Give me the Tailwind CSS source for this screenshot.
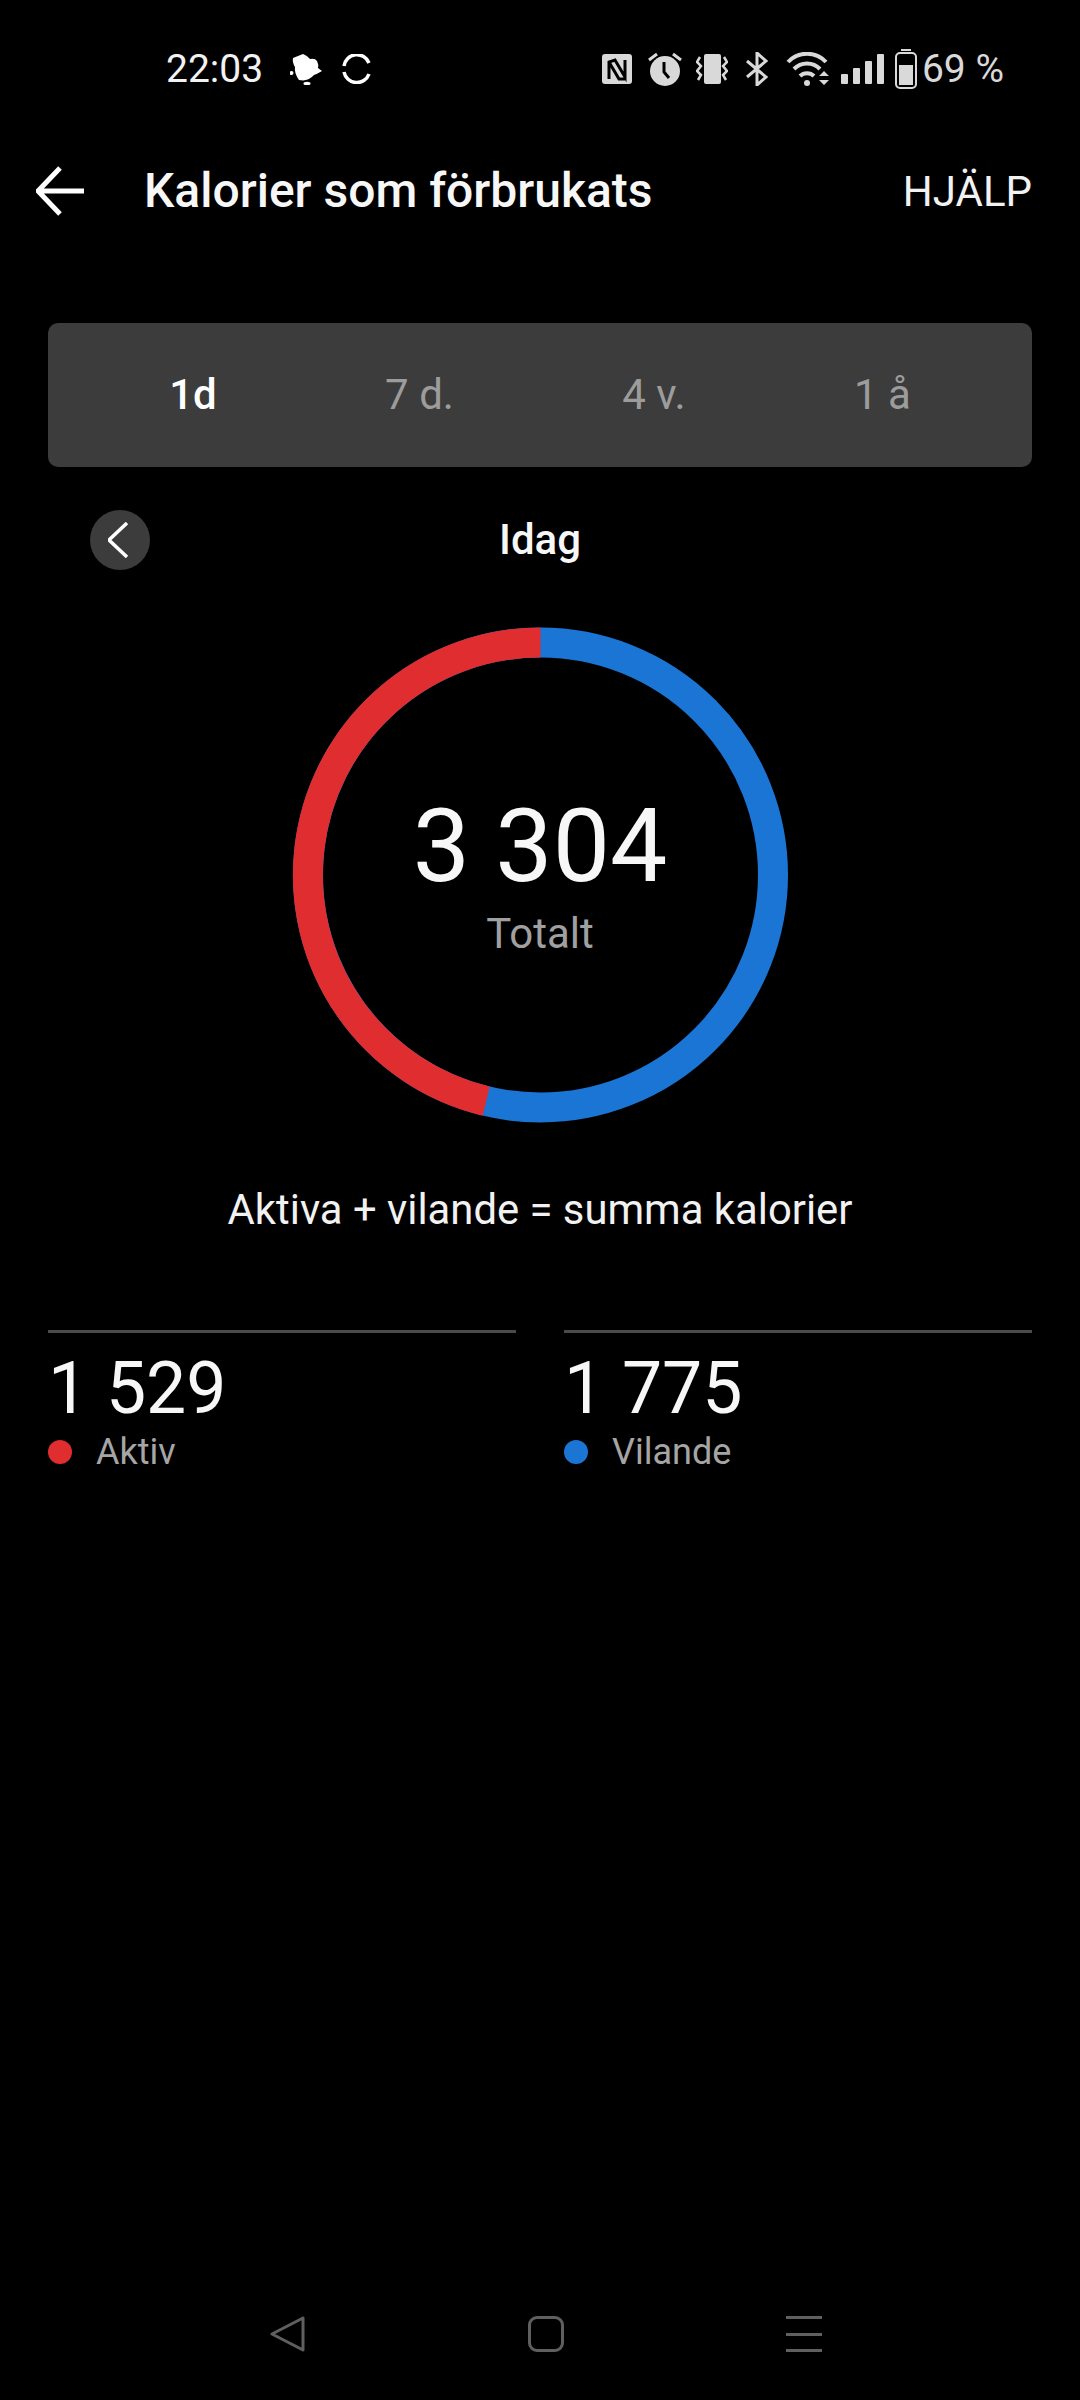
<!DOCTYPE html>
<html lang="sv">
<head>
    <meta charset="UTF-8">
    <meta name="viewport" content="width=device-width, initial-scale=1.0">
    <title>Kalorier som förbrukats</title>
    <script src="https://cdn.jsdelivr.net/npm/@tailwindcss/browser@4"></script>
</head>
<body class="bg-black">
    <div class="w-[1080px] h-[2400px] flex flex-col bg-black text-white font-['Roboto',sans-serif]">
        <!-- Status bar -->
        <div class="h-[138px] pl-[166px] pr-[76px] flex items-center text-[39px]">
            <span class="text-[#f2f2f2]">22:03</span>
            <svg class="w-[32px] h-[32px] ml-[27px]" viewBox="0 0 32 32" fill="#fff">
                <path d="M3 5Q8 3 13 1Q18 3 20 6Q25 5 27 8Q29 12 28 15L32 18Q27 21 24 22Q18 29 9 27Q4 20 5 14Q2 9 3 5z"/>
                <circle cx="1.5" cy="20" r="2"/><ellipse cx="17" cy="30.5" rx="3.5" ry="1.8"/>
            </svg>
            <svg class="w-[30px] h-[30px] ml-[20px]" viewBox="0 0 30 30" fill="none" stroke="#fff" stroke-width="3.5">
                <path d="M2 12A13 13 0 0 1 27 9"/>
                <path d="M27 20A13 13 0 0 1 2 18"/>
            </svg>
            <div class="ml-auto flex items-center text-[#d9d9d9]">
                <svg class="w-[30px] h-[30px]" viewBox="0 0 30 30">
                    <rect width="30" height="30" rx="3" fill="#d9d9d9"/>
                    <path d="M7 25V8l6-2 10 17V6M7 8l10 17h6" fill="none" stroke="#000" stroke-width="3"/>
                </svg>
                <svg class="w-[34px] h-[36px] ml-[16px]" viewBox="0 0 34 36">
                    <circle cx="17" cy="20" r="15" fill="#d9d9d9"/>
                    <path d="M16 11v10l5 6" fill="none" stroke="#000" stroke-width="3"/>
                    <path d="M1 9l8-6M33 9l-8-6" stroke="#d9d9d9" stroke-width="3"/>
                </svg>
                <svg class="w-[32px] h-[30px] ml-[14px]" viewBox="0 0 32 30">
                    <rect x="8" y="0" width="17" height="30" rx="2" fill="#d9d9d9"/>
                    <path d="M4 3L1 8l4 4-4 5 4 4-3 5M28 3l3 5-4 4 4 5-4 4 3 5" fill="none" stroke="#d9d9d9" stroke-width="2.5"/>
                </svg>
                <svg class="w-[22px] h-[34px] ml-[18px]" viewBox="0 0 22 34" fill="none" stroke="#d9d9d9" stroke-width="3">
                    <path d="M1 9l19 16-9 8V1l9 8L1 25"/>
                </svg>
                <svg class="w-[46px] h-[34px] ml-[18px]" viewBox="0 0 46 34">
                    <path d="M2 10a26 26 0 0 1 38 0M8 17a18 18 0 0 1 26 0M14 24a10 10 0 0 1 14 0" fill="none" stroke="#d9d9d9" stroke-width="4"/>
                    <circle cx="21" cy="31" r="3" fill="#d9d9d9"/>
                    <path d="M33 24l5-5 5 5zM33 28l5 5 5-5z" fill="#d9d9d9"/>
                </svg>
                <div class="flex items-end gap-[5px] h-[30px] ml-[9px]">
                    <div class="w-[7px] h-[10px] rounded-[1px] bg-[#d9d9d9]"></div>
                    <div class="w-[7px] h-[16px] rounded-[1px] bg-[#d9d9d9]"></div>
                    <div class="w-[7px] h-[23px] rounded-[1px] bg-[#d9d9d9]"></div>
                    <div class="w-[7px] h-[30px] rounded-[1px] bg-[#d9d9d9]"></div>
                </div>
                <svg class="w-[22px] h-[40px] ml-[11px]" viewBox="0 0 22 40">
                    <rect x="6" y="0" width="10" height="2" fill="#d9d9d9"/>
                    <rect x="1" y="4" width="20" height="35" rx="4" fill="none" stroke="#d9d9d9" stroke-width="2"/>
                    <rect x="4" y="16" width="14" height="20" fill="#d9d9d9"/>
                </svg>
                <span class="ml-[5px]">69 %</span>
            </div>
        </div>

        <!-- Header -->
        <div class="h-[106px] pl-[36px] pr-[48px] flex items-center">
            <svg class="w-[50px] h-[50px]" viewBox="0 0 50 50" fill="none" stroke="#fff" stroke-width="5">
                <path d="M48 25H3M24 2L2 25l22 23"/>
            </svg>
            <h1 class="ml-[58px] text-[48px] font-medium text-[#f7f7f7]">Kalorier som förbrukats</h1>
            <span class="ml-auto text-[42px] text-[#f2f2f2] mt-[1px]">HJÄLP</span>
        </div>

        <!-- Period tabs -->
        <div class="mx-[48px] mt-[79px] h-[144px] rounded-[10px] bg-[#3c3c3c] px-[37px] pb-[2px] flex justify-around items-center text-[42px] text-[#9c9c9c]">
            <span class="font-medium text-white">1d</span>
            <span>7 d.</span>
            <span>4 v.</span>
            <span>1 å</span>
        </div>

        <!-- Date row -->
        <div class="relative mt-[43px] h-[60px] pb-[2px] flex items-center justify-center">
            <div class="absolute left-[90px] top-0 w-[60px] h-[60px] rounded-full bg-[#3c3c3c] flex items-center justify-center">
                <svg class="w-[24px] h-[36px]" viewBox="0 0 24 36" fill="none" stroke="#fff" stroke-width="3.5">
                    <path d="M19 1L1 18l18 17"/>
                </svg>
            </div>
            <span class="text-[42px] font-medium text-[#f7f7f7]">Idag</span>
        </div>

        <!-- Ring -->
        <div class="relative mt-[57px] mx-auto w-[496px] h-[496px]">
            <svg class="w-full h-full" viewBox="0 0 496 496" fill="none" stroke-width="30">
                <circle cx="248.5" cy="248" r="232.5" stroke="#1a75d5"/>
                <path d="M248.5 15.5A232.5 232.5 0 0 0 194.2 474.1" stroke="#e02d30"/>
            </svg>
            <div class="absolute inset-0 flex flex-col items-center justify-center">
                <div class="text-[102px] leading-[100px] text-[#f7f7f7] mt-[3px]">3 304</div>
                <div class="text-[42px] leading-[48px] text-[#a0a0a0] mt-[14px]">Totalt</div>
            </div>
        </div>

        <p class="mt-[63px] text-center text-[41.8px] leading-[48px] text-[#f2f2f2]">Aktiva + vilande = summa kalorier</p>

        <!-- Breakdown -->
        <div class="mx-[48px] mt-[96px] grid grid-cols-2 gap-[48px]">
            <div class="border-t-[3px] border-[#4a4a4a] pt-[13px]">
                <div class="text-[71.5px] leading-[85px] text-[#f7f7f7]">1 529</div>
                <div class="mt-[1px] flex items-center text-[36px] leading-[40px] text-[#a5a5a5]">
                    <span class="w-[24px] h-[24px] rounded-full bg-[#e02d30]"></span>
                    <span class="ml-[24px]">Aktiv</span>
                </div>
            </div>
            <div class="border-t-[3px] border-[#4a4a4a] pt-[13px]">
                <div class="text-[71.5px] leading-[85px] text-[#f7f7f7]">1 775</div>
                <div class="mt-[1px] flex items-center text-[36px] leading-[40px] text-[#a5a5a5]">
                    <span class="w-[24px] h-[24px] rounded-full bg-[#1a75d5]"></span>
                    <span class="ml-[24px]">Vilande</span>
                </div>
            </div>
        </div>

        <!-- Navigation bar -->
        <div class="mt-auto h-[84px] pb-[48px] pl-[270px] pr-[258px] flex items-start justify-between">
            <svg class="w-[36px] h-[36px]" viewBox="0 0 36 36" fill="none" stroke="#5f5f5f" stroke-width="3" stroke-linejoin="round">
                <path d="M2 18L33 2v32z"/>
            </svg>
            <div class="w-[36px] h-[36px] rounded-[9px] border-[3px] border-[#5f5f5f]"></div>
            <div class="w-[36px] h-[36px] flex flex-col justify-between">
                <div class="h-[3px] bg-[#5f5f5f]"></div>
                <div class="h-[3px] bg-[#5f5f5f]"></div>
                <div class="h-[3px] bg-[#5f5f5f]"></div>
            </div>
        </div>
    </div>
</body>
</html>
